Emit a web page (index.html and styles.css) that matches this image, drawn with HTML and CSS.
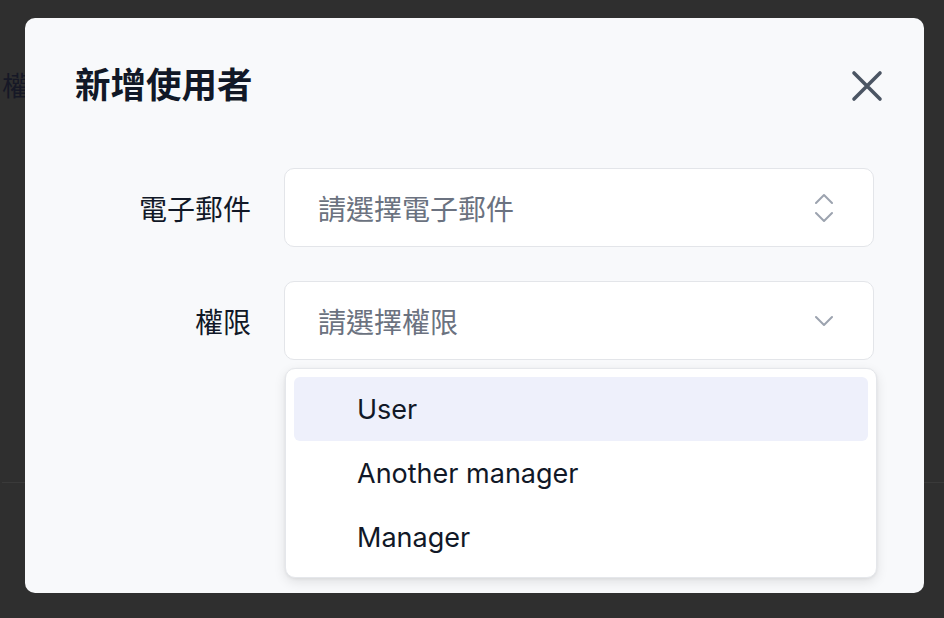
FILE: index.html
```html
<!DOCTYPE html>
<html lang="zh-Hant">
<head>
<meta charset="utf-8">
<title>新增使用者</title>
<link rel="stylesheet" href="styles.css">
</head>
<body>
<div class="page">
  <div class="page-title">權限</div>
  <div class="page-rule"></div>
</div>

<div class="modal" role="dialog" aria-labelledby="modal-title">
  <div class="modal-header">
    <h2 id="modal-title" class="modal-title">新增使用者</h2>
    <button class="close-btn" aria-label="關閉">
      <svg viewBox="0 0 32 32" width="32" height="32" fill="none" stroke="#4b5563" stroke-width="3.6" stroke-linecap="round">
        <path d="M3 3 L29 29 M29 3 L3 29"/>
      </svg>
    </button>
  </div>

  <div class="form">
    <label class="form-label">電子郵件</label>
    <div class="field">
      <div class="select">
        <span class="placeholder">請選擇電子郵件</span>
        <svg class="chev" viewBox="0 0 18 30" width="18" height="30" fill="none" stroke="#9ca3af" stroke-width="2" stroke-linecap="round" stroke-linejoin="round">
          <path d="M1 10 L9 2 L17 10"/>
          <path d="M1 20 L9 28 L17 20"/>
        </svg>
      </div>
    </div>

    <label class="form-label">權限</label>
    <div class="field">
      <div class="select">
        <span class="placeholder">請選擇權限</span>
        <svg class="chev" viewBox="0 0 18 12" width="18" height="12" fill="none" stroke="#9ca3af" stroke-width="2" stroke-linecap="round" stroke-linejoin="round">
          <path d="M1 2 L9 10 L17 2"/>
        </svg>
      </div>
      <ul class="menu">
        <li class="menu-item active">User</li>
        <li class="menu-item">Another manager</li>
        <li class="menu-item">Manager</li>
      </ul>
    </div>
  </div>
</div>
</body>
</html>
```

FILE: styles.css
```css
html, body {
  margin: 0;
  padding: 0;
  height: 100%;
}

body {
  background: #2f2f2f;
  font-family: Inter, "Noto Sans CJK TC", sans-serif;
  color: #111827;
  overflow: hidden;
}

.page {
  padding-top: 68px;
  padding-left: 2px;
}

.page-title {
  font-size: 27px;
  line-height: 38px;
  color: #161826;
}

.page-rule {
  margin-top: 376px;
  height: 1px;
  background: #3a3a3a;
}

.modal {
  position: absolute;
  left: 25px;
  top: 18px;
  width: 899px;
  height: 575px;
  box-sizing: border-box;
  padding: 44px 50px 0 50px;
  background: #f8f9fb;
  border-radius: 10px;
}

.modal-header {
  display: flex;
  align-items: center;
  justify-content: space-between;
  height: 48px;
}

.modal-title {
  margin: 0;
  font-size: 35.5px;
  font-weight: 700;
  line-height: 48px;
  color: #111827;
}

.close-btn {
  display: flex;
  padding: 0;
  margin-right: -9px;
  border: 0;
  background: none;
}

.form {
  margin-top: 58px;
  display: grid;
  grid-template-columns: 176px 1fr;
  column-gap: 33px;
  row-gap: 34px;
  align-items: center;
}

.form-label {
  text-align: right;
  font-size: 28px;
  color: #111827;
}

.field {
  position: relative;
}

.select {
  height: 79px;
  box-sizing: border-box;
  display: flex;
  align-items: center;
  justify-content: space-between;
  padding: 0 40px 0 33px;
  background: #ffffff;
  border: 1.5px solid #e3e5e9;
  border-radius: 10px;
}

.placeholder {
  font-size: 28px;
  color: #6b7280;
}

.menu {
  position: absolute;
  top: calc(100% + 8px);
  left: 1px;
  right: -3px;
  margin: 0;
  padding: 8px 8px;
  list-style: none;
  background: #ffffff;
  border: 1px solid #e5e7eb;
  border-radius: 10px;
  box-shadow: 0 4px 12px rgba(0, 0, 0, 0.10), 0 1px 3px rgba(0, 0, 0, 0.06);
}

.menu-item {
  height: 64px;
  display: flex;
  align-items: center;
  padding-left: 63px;
  font-size: 27px;
  color: #111827;
  border-radius: 6px;
}

.menu-item.active {
  background: #eef0fb;
}
```
